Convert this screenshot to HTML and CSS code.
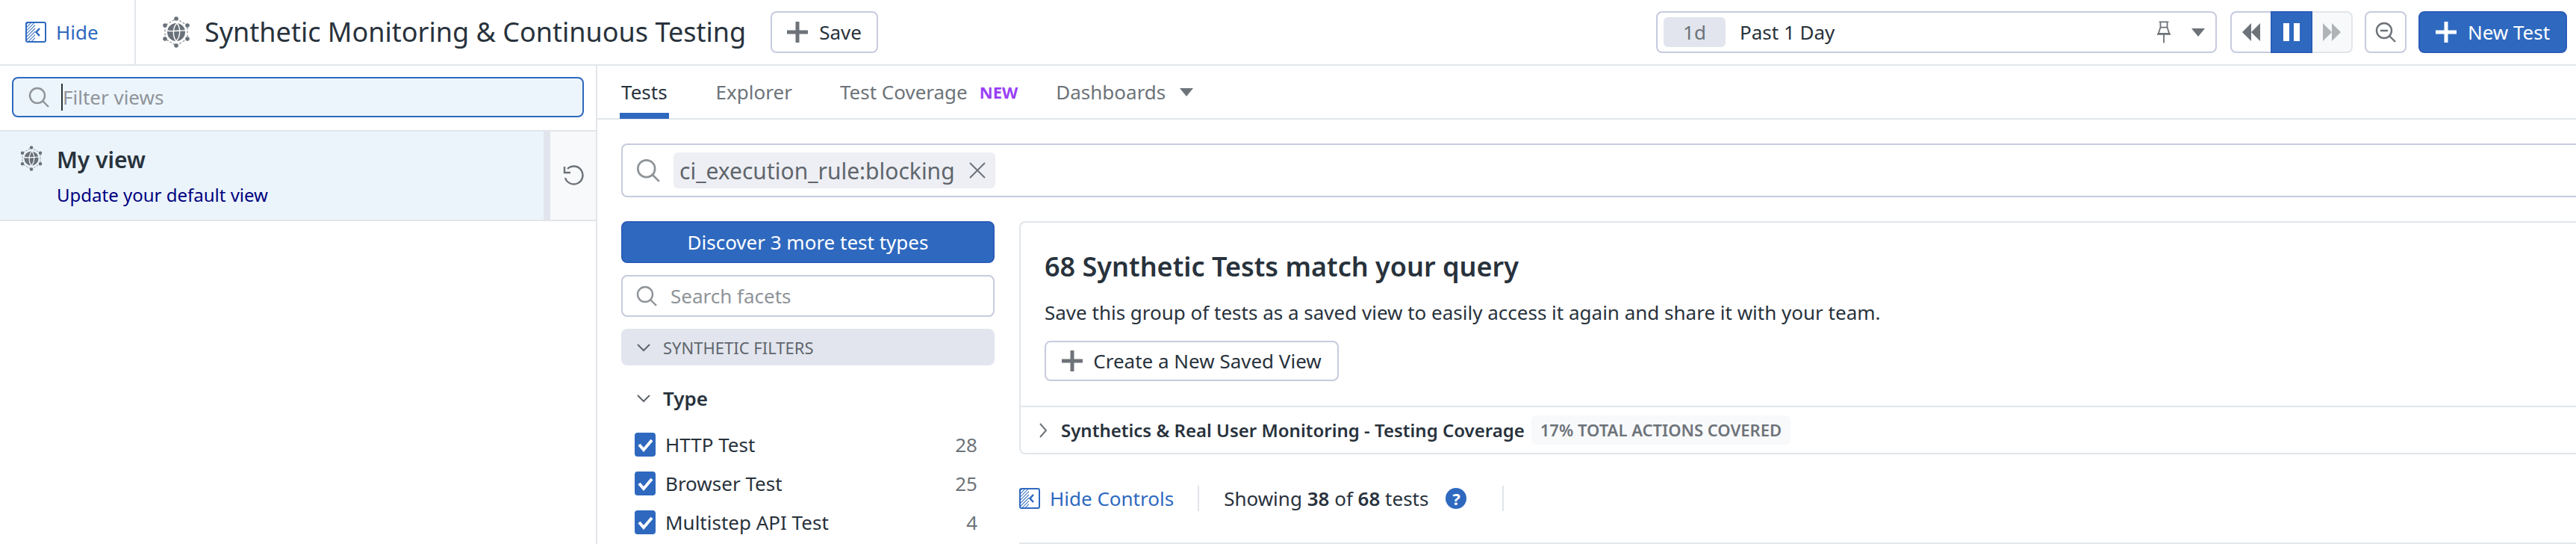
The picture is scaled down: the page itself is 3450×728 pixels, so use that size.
FILE: index.html
```html
<!DOCTYPE html>
<html>
<head>
    <title>Synthetic Monitoring &amp; Continuous Testing</title>
    <link rel="stylesheet" href="styles.css">
</head>
<body>
    <svg class="defs" width="0" height="0">
        <defs>
            <pattern id="hatch" width="3" height="3" patternUnits="userSpaceOnUse" patternTransform="rotate(45)">
                <rect width="1" height="3" fill="#2e69bf"></rect>
            </pattern>
            <symbol id="panel" viewBox="0 0 28 28">
                <rect x="2" y="2" width="11" height="24" fill="url(#hatch)"></rect>
                <rect x="1" y="1" width="26" height="26" rx="2" fill="none" stroke="#2e69bf" stroke-width="2"></rect>
                <path d="M19 9l-4.500 5 4.500 5" fill="none" stroke="#2e69bf" stroke-width="2.500"></path>
            </symbol>
            <symbol id="globe" viewBox="0 0 40 44">
                <path d="M20 4L35 13V31L20 40L5 31V13Z" fill="none" stroke="#7b8289" stroke-width="1.100" stroke-dasharray="3 2"></path>
                <circle cx="20" cy="4" r="2.800" fill="#69717a"></circle>
                <circle cx="35" cy="13" r="2.800" fill="#69717a"></circle>
                <circle cx="35" cy="31" r="2.800" fill="#69717a"></circle>
                <circle cx="20" cy="40" r="2.800" fill="#69717a"></circle>
                <circle cx="5" cy="31" r="2.800" fill="#69717a"></circle>
                <circle cx="5" cy="13" r="2.800" fill="#69717a"></circle>
                <circle cx="20" cy="22" r="12" fill="#69717a"></circle>
                <path d="M8 20C15 22 25 19 32 20M21 10C15 16 15 28 20 34M21 10C26 16 26 28 20 34" fill="none" stroke="#fff" stroke-width="1.400"></path>
            </symbol>
            <symbol id="search" viewBox="0 0 28 28">
                <circle cx="12" cy="12" r="10" fill="none" stroke="currentColor" stroke-width="2.400"></circle>
                <path d="M19 19l8 8" stroke="currentColor" stroke-width="2.400"></path>
            </symbol>
            <symbol id="plus" viewBox="0 0 28 28">
                <path d="M14 0V28M0 14H28" stroke="currentColor" stroke-width="5"></path>
            </symbol>
            <symbol id="chevron" viewBox="0 0 20 12">
                <path d="M2 2l8 8 8-8" fill="none" stroke="currentColor" stroke-width="2"></path>
            </symbol>
            <symbol id="tick" viewBox="0 0 28 32">
                <path d="M6 16l6 7 11-13" fill="none" stroke="#fff" stroke-width="4"></path>
            </symbol>
        </defs>
    </svg>

    <header class="topbar">
        <a class="hide-link">
            <svg class="icon-panel"><use href="#panel"></use></svg>
            Hide
        </a>
        <svg class="icon-globe"><use href="#globe"></use></svg>
        <h1 class="page-title">Synthetic Monitoring &amp; Continuous Testing</h1>
        <button class="btn btn-save">
            <svg class="icon-plus"><use href="#plus"></use></svg>
            Save
        </button>

        <div class="top-right">
            <div class="time-picker">
                <span class="time-chip">1d</span>
                <span class="time-label">Past 1 Day</span>
                <svg class="icon-pin" viewBox="0 0 22 32">
                    <path d="M4 1H18M6 2V9M16 2V9M6 9H16L19 18H3ZM1 19H21M11 20V32" fill="none" stroke="#6d7379" stroke-width="2"></path>
                </svg>
                <span class="caret"></span>
            </div>
            <div class="playback">
                <span class="play-btn">
                    <svg class="icon-skip" viewBox="0 0 24 24"><path d="M12 0V24L0 12ZM24 0V24L12 12Z" fill="#6d7379"></path></svg>
                </span>
                <span class="play-btn play-active">
                    <svg class="icon-pause" viewBox="0 0 22 24"><path d="M0 0H8V24H0ZM14 0H22V24H14Z" fill="#fff"></path></svg>
                </span>
                <span class="play-btn play-off">
                    <svg class="icon-skip" viewBox="0 0 24 24"><path d="M0 0V24L12 12ZM12 0V24L24 12Z" fill="#afb4b6"></path></svg>
                </span>
            </div>
            <button class="btn btn-zoom">
                <svg class="icon-zoom" viewBox="0 0 28 28">
                    <circle cx="12" cy="12" r="10" fill="none" stroke="#6d7379" stroke-width="2.400"></circle>
                    <path d="M19 19l8 8M7 12H17" stroke="#6d7379" stroke-width="2.400"></path>
                </svg>
            </button>
            <button class="btn btn-primary btn-new">
                <svg class="icon-new"><use href="#plus"></use></svg>
                New Test
            </button>
        </div>
    </header>

    <div class="layout">
        <aside class="sidebar">
            <div class="filter-wrap">
                <div class="filter-input">
                    <svg class="icon-search"><use href="#search"></use></svg>
                    <span class="text-cursor"></span>
                    <span class="placeholder">Filter views</span>
                </div>
            </div>
            <div class="view-row">
                <div class="view-main">
                    <svg class="icon-globe-small"><use href="#globe"></use></svg>
                    <div>
                        <div class="view-name">My view</div>
                        <div class="view-link">Update your default view</div>
                    </div>
                </div>
                <div class="view-reset">
                    <svg class="icon-reset" viewBox="0 0 28 28">
                        <path d="M6 5A12 12 0 1 1 3 17" fill="none" stroke="#6d7379" stroke-width="2.400"></path>
                        <path d="M2 2V10H10" fill="none" stroke="#6d7379" stroke-width="2.400"></path>
                    </svg>
                </div>
            </div>
        </aside>

        <main class="content">
            <nav class="tabs">
                <a class="tab tab-active">Tests</a>
                <a class="tab tab-explorer">Explorer</a>
                <a class="tab tab-coverage">Test Coverage</a>
                <span class="new-tag">NEW</span>
                <a class="tab tab-dash">Dashboards</a>
                <span class="caret"></span>
            </nav>

            <div class="query-bar">
                <svg class="icon-query"><use href="#search"></use></svg>
                <span class="query-chip">
                    ci_execution_rule:blocking
                    <svg class="icon-close" viewBox="0 0 24 24"><path d="M2 2L22 22M22 2L2 22" stroke="#6d7379" stroke-width="2"></path></svg>
                </span>
            </div>

            <div class="columns">
                <section class="facets">
                    <button class="btn btn-primary btn-discover">Discover 3 more test types</button>
                    <div class="facet-search">
                        <svg class="icon-search"><use href="#search"></use></svg>
                        <span class="placeholder">Search facets</span>
                    </div>
                    <div class="facet-group">
                        <svg class="icon-chevron"><use href="#chevron"></use></svg>
                        SYNTHETIC FILTERS
                    </div>
                    <div class="facet-title">
                        <svg class="icon-chevron"><use href="#chevron"></use></svg>
                        Type
                    </div>
                    <div class="facet-item">
                        <span class="checkbox"><svg><use href="#tick"></use></svg></span>
                        <span class="facet-name">HTTP Test</span>
                        <span class="facet-count">28</span>
                    </div>
                    <div class="facet-item">
                        <span class="checkbox"><svg><use href="#tick"></use></svg></span>
                        <span class="facet-name">Browser Test</span>
                        <span class="facet-count">25</span>
                    </div>
                    <div class="facet-item">
                        <span class="checkbox"><svg><use href="#tick"></use></svg></span>
                        <span class="facet-name">Multistep API Test</span>
                        <span class="facet-count">4</span>
                    </div>
                </section>

                <section class="results">
                    <div class="card">
                        <div class="card-body">
                            <h2 class="card-title">68 Synthetic Tests match your query</h2>
                            <p class="card-text">Save this group of tests as a saved view to easily access it again and share it with your team.</p>
                            <button class="btn btn-create">
                                <svg class="icon-create"><use href="#plus"></use></svg>
                                Create a New Saved View
                            </button>
                        </div>
                        <div class="card-foot">
                            <svg class="icon-expand" viewBox="0 0 12 22"><path d="M2 2l8 9-8 9" fill="none" stroke="#6d7379" stroke-width="2"></path></svg>
                            <span class="coverage-title">Synthetics &amp; Real User Monitoring - Testing Coverage</span>
                            <span class="coverage-badge">17% TOTAL ACTIONS COVERED</span>
                        </div>
                    </div>
                    <div class="controls">
                        <a class="hide-controls">
                            <svg class="icon-panel"><use href="#panel"></use></svg>
                            Hide Controls
                        </a>
                        <span class="controls-sep"></span>
                        <span class="showing">Showing <b>38</b> of <b>68</b> tests</span>
                        <span class="help">?</span>
                        <span class="controls-sep controls-sep-last"></span>
                    </div>
                    <div class="results-table"></div>
                </section>
            </div>
        </main>
    </div>
</body>
</html>
```

FILE: styles.css
```css
* {
    box-sizing: border-box;
}
body {
    margin: 0;
    height: 728px;
    overflow: hidden;
    background-color: #fff;
    color: #28323c;
    font-family: "Noto Sans", Arial, sans-serif;
    font-size: 26px;
}
svg {
    flex: none;
    display: block;
}
.defs {
    position: absolute;
}
.btn {
    display: flex;
    align-items: center;
    justify-content: center;
    height: 56px;
    padding: 0;
    background-color: #fff;
    border: 2px solid #c7cbde;
    border-radius: 8px;
    color: #28323c;
    font-family: inherit;
    font-size: 26px;
}
.btn-primary {
    background-color: #2e69bf;
    border-color: #2a5cb8;
    color: #fff;
}

/* top bar */
.topbar {
    display: flex;
    align-items: center;
    height: 88px;
    border-bottom: 2px solid #e2e6ea;
}
.hide-link {
    display: flex;
    align-items: center;
    gap: 13px;
    width: 182px;
    height: 86px;
    padding-left: 34px;
    border-right: 2px solid #e2e6ea;
    color: #2e69bf;
}
.icon-panel {
    width: 28px;
    height: 28px;
}
.icon-globe {
    width: 40px;
    height: 44px;
    margin-left: 34px;
}
.page-title {
    margin: 0 33px 0 18px;
    font-size: 36px;
    font-weight: 400;
    line-height: 50px;
    white-space: nowrap;
}
.btn-save {
    gap: 15px;
    width: 144px;
}
.icon-plus {
    width: 28px;
    height: 28px;
    color: #6d7379;
}
.top-right {
    display: flex;
    align-items: center;
    margin-left: auto;
    padding-right: 12px;
}
.time-picker {
    display: flex;
    align-items: center;
    width: 751px;
    height: 56px;
    padding: 0 14px 0 8px;
    border: 2px solid #c7cbde;
    border-radius: 8px;
}
.time-chip {
    width: 83px;
    height: 40px;
    background-color: #e2e5ed;
    border-radius: 6px;
    color: #6d7379;
    line-height: 40px;
    text-align: center;
}
.time-label {
    margin-left: 19px;
}
.icon-pin {
    width: 20px;
    height: 30px;
    margin-left: auto;
}
.caret {
    flex: none;
    width: 0;
    height: 0;
    border-left: 9.500px solid transparent;
    border-right: 9.500px solid transparent;
    border-top: 11px solid #6d7379;
}
.time-picker .caret {
    margin-left: 27px;
}
.playback {
    display: flex;
    margin-left: 18px;
    height: 56px;
}
.play-btn {
    display: flex;
    align-items: center;
    justify-content: center;
    width: 54px;
    border: 2px solid #c7cbde;
    border-right: 0;
    border-radius: 8px 0 0 8px;
}
.play-active {
    width: 56px;
    background-color: #2e69bf;
    border: 2px solid #2a5cb8;
    border-radius: 0;
}
.play-off {
    background-color: #f8f9fb;
    border: 2px solid #e2e6ea;
    border-left: 0;
    border-radius: 0 8px 8px 0;
}
.icon-skip {
    width: 24px;
    height: 24px;
}
.icon-pause {
    width: 22px;
    height: 24px;
}
.btn-zoom {
    width: 56px;
    margin-left: 16px;
}
.icon-zoom {
    width: 28px;
    height: 28px;
}
.btn-new {
    gap: 15px;
    width: 199px;
    margin-left: 16px;
}
.icon-new {
    width: 28px;
    height: 28px;
    color: #fff;
}

/* left list of views */
.layout {
    display: flex;
    height: 640px;
}
.sidebar {
    flex: none;
    width: 800px;
    border-right: 2px solid #e2e6ea;
}
.filter-wrap {
    height: 88px;
    padding: 15px 16px 0;
    border-bottom: 2px solid #e2e6ea;
}
.filter-input {
    display: flex;
    align-items: center;
    width: 766px;
    height: 54px;
    padding-left: 20px;
    background-color: #edf5fc;
    border: 2px solid #2e69bf;
    border-radius: 8px;
}
.icon-search {
    width: 28px;
    height: 28px;
    color: #8f9499;
}
.text-cursor {
    width: 2px;
    height: 36px;
    margin-left: 16px;
    background-color: #28323c;
}
.placeholder {
    color: #8f9499;
}
.view-row {
    display: flex;
    height: 120px;
    border-bottom: 2px solid #e2e6ea;
}
.view-main {
    display: flex;
    width: 737px;
    padding: 18px 0 0 26px;
    background-color: #ebf4fb;
    border-right: 9px solid #e2e5ed;
}
.icon-globe-small {
    width: 32px;
    height: 36px;
}
.view-name {
    margin-left: 18px;
    font-size: 30px;
    font-weight: 600;
    line-height: 40px;
}
.view-link {
    margin: 9px 0 0 18px;
    color: #00007f;
    font-size: 24px;
    line-height: 36px;
}
.view-reset {
    flex: 1;
    display: flex;
    align-items: center;
    justify-content: center;
    background-color: #f8f9fb;
}
.icon-reset {
    width: 28px;
    height: 28px;
}

/* tabs and query */
.content {
    flex: 1;
    min-width: 0;
}
.tabs {
    display: flex;
    align-items: center;
    height: 72px;
    padding-left: 32px;
    border-bottom: 2px solid #e2e6ea;
    color: #6d7379;
}
.tab {
    position: relative;
}
.tab-active {
    color: #28323c;
}
.tab-active::after {
    content: "";
    position: absolute;
    left: -2px;
    right: -2px;
    bottom: -18px;
    height: 8px;
    background-color: #2e69bf;
}
.tab-explorer {
    margin-left: 65px;
}
.tab-coverage {
    margin-left: 64px;
}
.new-tag {
    margin-left: 16px;
    color: #9a3ff5;
    font-size: 22px;
    font-weight: 700;
}
.tab-dash {
    margin-left: 51px;
}
.tabs .caret {
    margin-left: 19px;
}
.query-bar {
    display: flex;
    align-items: center;
    height: 72px;
    margin: 32px 0 0 32px;
    padding-left: 18px;
    border: 2px solid #c7cbde;
    border-right: 0;
    border-radius: 8px 0 0 8px;
}
.icon-query {
    width: 32px;
    height: 34px;
    color: #8f9499;
}
.query-chip {
    display: flex;
    align-items: center;
    height: 48px;
    margin-left: 18px;
    padding: 0 12px 0 8px;
    background-color: #eeeff4;
    border-radius: 6px;
    color: #5f666d;
    font-size: 30px;
}
.icon-close {
    width: 24px;
    height: 24px;
    margin-left: 18px;
}
.columns {
    display: flex;
    margin-top: 32px;
    padding-left: 32px;
}

/* facets */
.facets {
    flex: none;
    width: 500px;
}
.btn-discover {
    width: 100%;
}
.facet-search {
    display: flex;
    align-items: center;
    height: 56px;
    margin-top: 16px;
    padding-left: 18px;
    border: 2px solid #c7cbde;
    border-radius: 8px;
}
.facet-search .placeholder {
    margin-left: 18px;
}
.facet-group {
    display: flex;
    align-items: center;
    height: 49px;
    margin-top: 16px;
    padding-left: 20px;
    background-color: #e2e5ed;
    border-radius: 8px;
    color: #5f666d;
    font-size: 22px;
}
.icon-chevron {
    width: 20px;
    height: 12px;
    margin-right: 16px;
    color: #5f666d;
}
.facet-title {
    display: flex;
    align-items: center;
    height: 40px;
    margin: 24px 0 26px;
    padding-left: 20px;
    font-weight: 600;
}
.facet-item {
    display: flex;
    align-items: center;
    height: 32px;
    margin-bottom: 20px;
    padding: 0 23px 0 18px;
}
.checkbox {
    width: 28px;
    height: 32px;
    background-color: #2e69bf;
    border-radius: 4px;
}
.checkbox svg {
    width: 28px;
    height: 32px;
}
.facet-name {
    margin-left: 13px;
}
.facet-count {
    margin-left: auto;
    color: #6d7379;
}

/* results */
.results {
    flex: 1;
    min-width: 0;
    margin-left: 33px;
}
.card {
    height: 312px;
    border: 2px solid #e2e6ea;
    border-right: 0;
    border-radius: 8px 0 0 8px;
}
.card-body {
    height: 247px;
    padding: 34px 0 0 32px;
    border-bottom: 2px solid #e2e6ea;
}
.card-title {
    margin: 0;
    font-size: 36px;
    font-weight: 600;
    line-height: 50px;
}
.card-text {
    margin: 18px 0 0;
    line-height: 36px;
}
.btn-create {
    gap: 14px;
    width: 394px;
    height: 54px;
    margin-top: 20px;
}
.icon-create {
    width: 28px;
    height: 28px;
    color: #6d7379;
}
.card-foot {
    display: flex;
    align-items: center;
    height: 61px;
    padding-left: 24px;
}
.icon-expand {
    width: 12px;
    height: 22px;
}
.coverage-title {
    margin-left: 18px;
    font-size: 24px;
    font-weight: 600;
}
.coverage-badge {
    height: 39px;
    margin-left: 9px;
    padding: 0 12px;
    background-color: #f8f9fb;
    border-radius: 6px;
    color: #6d7379;
    font-size: 22px;
    font-weight: 600;
    line-height: 39px;
}
.controls {
    display: flex;
    align-items: center;
    height: 34px;
    margin-top: 42px;
}
.hide-controls {
    display: flex;
    align-items: center;
    gap: 13px;
    color: #2e69bf;
}
.controls-sep {
    width: 2px;
    height: 34px;
    margin-left: 32px;
    background-color: #e2e6ea;
}
.showing {
    margin-left: 33px;
}
.showing b {
    font-weight: 600;
}
.help {
    flex: none;
    width: 28px;
    height: 28px;
    margin-left: 23px;
    background-color: #2e69bf;
    border-radius: 50%;
    color: #fff;
    font-size: 22px;
    font-weight: 700;
    line-height: 28px;
    text-align: center;
}
.controls-sep-last {
    margin-left: 48px;
}
.results-table {
    height: 40px;
    margin-top: 42px;
    border-top: 2px solid #e2e6ea;
}
```
